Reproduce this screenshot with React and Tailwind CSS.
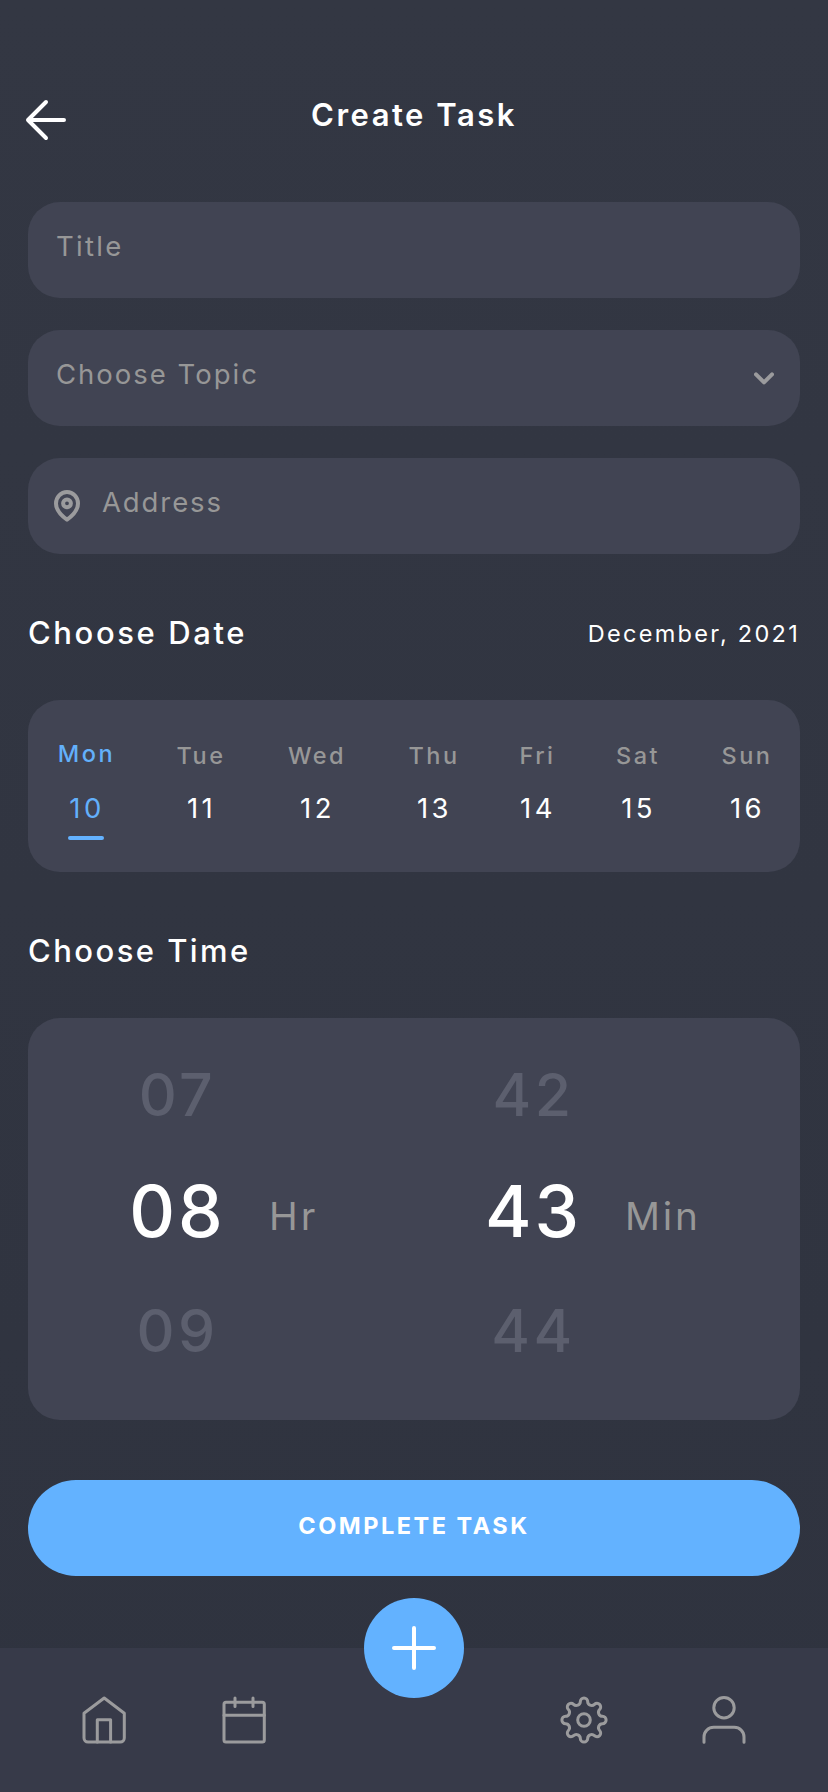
import React from "react";

const days = [
  { name: "Mon", date: 10, active: true },
  { name: "Tue", date: 11 },
  { name: "Wed", date: 12 },
  { name: "Thu", date: 13 },
  { name: "Fri", date: 14 },
  { name: "Sat", date: 15 },
  { name: "Sun", date: 16 },
];

// Rounded input row
const Field = ({ icon, children, right, tracking = "tracking-[2px]" }) => (
  <div className="flex h-24 items-center rounded-[32px] bg-[#414453] pl-7 pr-[26px] text-[27.5px] text-[#979797]">
    {icon}
    <span className={`flex-1 pb-2 leading-9 ${tracking}`}>{children}</span>
    {right}
  </div>
);

// Section heading above the date and time cards
const SectionTitle = ({ children, right, tracking = "tracking-[2.6px]" }) => (
  <div className="flex h-[146px] items-start justify-between pt-[58px]">
    <h2 className={`text-[31px] font-medium leading-[41px] ${tracking}`}>{children}</h2>
    {right}
  </div>
);

const Day = ({ name, date, active }) => (
  <div
    className={`flex flex-col items-center ${active ? "pt-[39px] text-[#63b0fb]" : "pt-[41px]"}`}
  >
    <span
      className={`pl-[2px] text-[23.5px] font-medium leading-[30px] tracking-[2.5px] ${
        active ? "mb-[21px]" : "mb-[19px] text-[#979797]"
      }`}
    >
      {name}
    </span>
    <span className="pl-[3px] text-[27.5px] leading-9 tracking-[3.4px]">{date}</span>
    {active && <span className="mt-[10px] h-1 w-9 rounded-full bg-[#63b2ff]" />}
  </div>
);

const TimePicker = ({ prev, value, next, unit }) => (
  <div className="flex w-[356px] shrink-0">
    <div className="flex w-[151px] flex-col items-center pl-1 pt-[47px] font-medium">
      <span className="text-[59px] leading-[60px] tracking-[3.5px] text-[#5c5f6e]">{prev}</span>
      <span className="mt-[46px] text-[71px] leading-[80px] tracking-[3px]">{value}</span>
      <span className="mt-[50px] text-[59px] leading-[60px] tracking-[3.5px] text-[#5c5f6e]">
        {next}
      </span>
    </div>
    <span className="pl-[18px] pt-[173px] text-[38.7px] leading-[50px] tracking-[2.9px] text-[#979797]">
      {unit}
    </span>
  </div>
);

const NavIcon = ({ children }) => (
  <svg
    className="size-12"
    viewBox="0 0 48 48"
    fill="none"
    stroke="#9b9b9d"
    strokeWidth="3"
    strokeLinecap="round"
    strokeLinejoin="round"
  >
    {children}
  </svg>
);

const App = () => {
  return (
    <div className="flex h-[1792px] w-[828px] flex-col bg-linear-to-b from-[#333743] to-[#2f333f] font-[Inter,sans-serif] text-white">
      {/* Header */}
      <header className="grid h-[202px] grid-cols-[1fr_auto_1fr] items-start px-6 pt-[90px]">
        <svg
          className="h-[60px] w-11"
          viewBox="0 0 44 60"
          fill="none"
          stroke="#fff"
          strokeWidth="4"
          strokeLinecap="round"
          strokeLinejoin="round"
        >
          <path d="M40 30H4M22 12L4 30l18 18" />
        </svg>
        <h1 className="text-[31px] font-semibold leading-[50px] tracking-[2.5px]">Create Task</h1>
      </header>

      <main className="flex flex-1 flex-col px-7">
        {/* Inputs */}
        <div className="flex flex-col gap-8">
          <Field tracking="tracking-[2.3px]">Title</Field>
          <Field
            right={
              <svg
                className="h-[13px] w-5"
                viewBox="0 0 20 13"
                fill="none"
                stroke="#9b9b9d"
                strokeWidth="4"
                strokeLinecap="round"
                strokeLinejoin="round"
              >
                <path d="M2 2.4l8 8 8-8" />
              </svg>
            }
          >
            Choose Topic
          </Field>
          <Field
            tracking="tracking-[1.9px]"
            icon={
              <svg
                className="-ml-0.5 mr-[22px] h-8 w-[26px]"
                viewBox="0 0 26 32"
                fill="none"
                stroke="#9b9b9d"
                strokeWidth="4"
                strokeLinejoin="round"
              >
                <path d="M24 13.4C24 19.5 19.5 25 13 29.7 6.5 25 2 19.5 2 13.4a11 11.4 0 0 1 22 0z" />
                <circle cx="13" cy="13.3" r="3.9" />
              </svg>
            }
          >
            Address
          </Field>
        </div>

        {/* Date */}
        <SectionTitle
          right={
            <span className="pt-px text-[23.5px] leading-[41px] tracking-[2.28px]">
              December, 2021
            </span>
          }
        >
          Choose Date
        </SectionTitle>
        <div className="grid h-[172px] grid-cols-[115px_114px_118px_116px_91px_110px_108px] rounded-[32px] bg-[#414453]">
          {days.map((day) => (
            <Day key={day.name} {...day} />
          ))}
        </div>

        {/* Time */}
        <SectionTitle tracking="tracking-[2.45px]">Choose Time</SectionTitle>
        <div className="flex h-[402px] rounded-[32px] bg-[#414453] pl-[72px]">
          <TimePicker prev="07" value="08" next="09" unit="Hr" />
          <TimePicker prev="42" value="43" next="44" unit="Min" />
        </div>

        <button className="mt-[60px] h-24 rounded-full bg-[#63b2ff] pb-[5px] text-[23.5px] font-bold tracking-[2.5px]">
          COMPLETE TASK
        </button>
      </main>

      {/* Bottom navigation */}
      <nav className="relative flex h-36 justify-between bg-[#373a49] px-20 pt-12">
        <div className="flex gap-[92px]">
          <NavIcon>
            <path d="M24.2 2L44.3 17.3V42a4 4 0 0 1-4 4H8a4 4 0 0 1-4-4V17.3z" />
            <path d="M17.3 46V23.7h13.3V46" />
          </NavIcon>
          <NavIcon>
            <rect x="4" y="6.3" width="40.3" height="39.7" rx="2" />
            <path d="M4 19.3h40.3M15 2v8.5M33 2v8.5" />
          </NavIcon>
        </div>
        <div className="flex gap-[92px]">
          <NavIcon>
            <path d="M20.33 5.56A3.67 3.67 0 0 1 27.67 5.56A3.97 3.97 0 0 0 34.44 8.37A3.67 3.67 0 0 1 39.63 13.56A3.97 3.97 0 0 0 42.44 20.33A3.67 3.67 0 0 1 42.44 27.67A3.97 3.97 0 0 0 39.63 34.44A3.67 3.67 0 0 1 34.44 39.63A3.97 3.97 0 0 0 27.67 42.44A3.67 3.67 0 0 1 20.33 42.44A3.97 3.97 0 0 0 13.56 39.63A3.67 3.67 0 0 1 8.37 34.44A3.97 3.97 0 0 0 5.56 27.67A3.67 3.67 0 0 1 5.56 20.33A3.97 3.97 0 0 0 8.37 13.56A3.67 3.67 0 0 1 13.56 8.37A3.97 3.97 0 0 0 20.33 5.56z" />
            <circle cx="24" cy="24" r="6.3" />
          </NavIcon>
          <NavIcon>
            <circle cx="24" cy="11.7" r="10.2" />
            <path d="M4 46.3V41a9.7 9.7 0 0 1 9.7-9.7h20.6A9.7 9.7 0 0 1 44 41v5.3" />
          </NavIcon>
        </div>

        {/* Floating add button */}
        <button className="absolute -top-[50px] left-[364px] flex size-[100px] items-center justify-center rounded-full bg-[#63b2ff]">
          <svg
            className="size-11"
            viewBox="0 0 44 44"
            stroke="#fff"
            strokeWidth="4"
            strokeLinecap="round"
          >
            <path d="M22 2v40M2 22h40" />
          </svg>
        </button>
      </nav>
    </div>
  );
};

export default App;
